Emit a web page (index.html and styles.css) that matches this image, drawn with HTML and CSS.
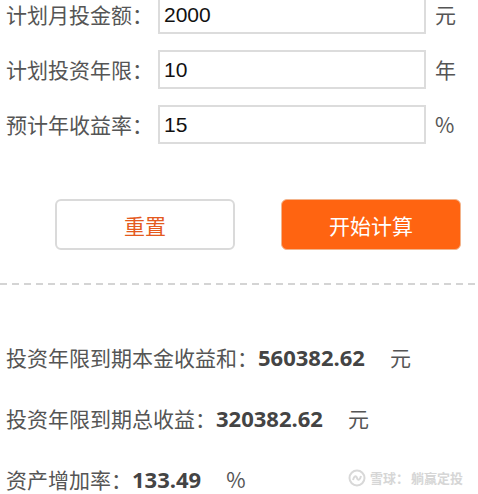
FILE: index.html
```html
<!DOCTYPE html>
<html lang="zh-CN">
<head>
<meta charset="utf-8">
<link rel="stylesheet" href="styles.css">
</head>
<body>
<div class="page">
  <div class="form">
    <div class="row">
      <span class="label">计划月投金额：</span>
      <div class="input">2000</div>
      <span class="unit">元</span>
    </div>
    <div class="row">
      <span class="label">计划投资年限：</span>
      <div class="input">10</div>
      <span class="unit">年</span>
    </div>
    <div class="row">
      <span class="label">预计年收益率：</span>
      <div class="input">15</div>
      <span class="unit">%</span>
    </div>
  </div>
  <div class="buttons">
    <button class="btn btn-reset">重置</button>
    <button class="btn btn-go">开始计算</button>
  </div>
  <div class="divider"></div>
  <div class="results">
    <div class="res"><span>投资年限到期本金收益和：</span><b class="num">560382.62</b><span class="runit">元</span></div>
    <div class="res"><span>投资年限到期总收益：</span><b class="num">320382.62</b><span class="runit">元</span></div>
    <div class="res"><span>资产增加率：</span><b class="num">133.49</b><span class="runit">%</span></div>
  </div>
  <div class="watermark">
    <svg class="wm-logo" width="20" height="18" viewBox="0 0 20 18">
      <circle cx="9" cy="9" r="7.5" fill="none" stroke="#d8d8d8" stroke-width="2"/>
      <path d="M5 11c1-4 3-5 4-2s3 2 4-2" fill="none" stroke="#d8d8d8" stroke-width="2"/>
    </svg>
    <span class="wm-text">雪球：</span><span class="wm-text">躺赢定投</span>
  </div>
</div>
</body>
</html>
```

FILE: styles.css
```css
* { box-sizing: border-box; }
html, body {
  margin: 0;
  padding: 0;
  background: #fff;
}
body {
  font-family: "Noto Sans CJK SC", "Noto Sans", sans-serif;
  color: #555;
}
.page {
  position: relative;
  width: 478px;
  height: 494px;
  overflow: hidden;
}
.form {
  margin-top: -5px;
  padding-left: 6px;
  display: flex;
  flex-direction: column;
  gap: 16px;
}
.row {
  display: flex;
  align-items: center;
  height: 39px;
}
.label {
  font-size: 21px;
  width: 152px;
  white-space: nowrap;
  line-height: 1;
}
.input {
  width: 268px;
  height: 39px;
  border: 2px solid #dcdcdc;
  font-family: "Liberation Sans", Arial, sans-serif;
  font-size: 21px;
  color: #111;
  padding-left: 4px;
  display: flex;
  align-items: center;
}
.unit {
  margin-left: 9px;
  font-size: 21px;
  line-height: 1;
  color: #555;
}
.buttons {
  display: flex;
  gap: 46px;
  margin-top: 55px;
  padding-left: 55px;
}
.btn {
  width: 180px;
  height: 51px;
  border-radius: 6px;
  font-family: "Noto Sans CJK SC", sans-serif;
  font-size: 21px;
  display: flex;
  align-items: center;
  justify-content: center;
  padding: 0;
}
.btn-reset {
  background: #fff;
  border: 2px solid #dadada;
  color: #e45a1e;
}
.btn-go {
  background: #ff6411;
  border: 1px solid #f3b48c;
  color: #fff;
}
.divider {
  margin-top: 33px;
  height: 2px;
  background-image: linear-gradient(to right, #d4d4d4 0 7px, transparent 7px 12px);
  background-size: 12px 2px;
  background-repeat: repeat-x;
}
.results {
  margin-top: 57px;
  padding-left: 6px;
  display: flex;
  flex-direction: column;
  gap: 31px;
}
.res {
  display: flex;
  align-items: center;
  height: 30px;
  font-size: 21px;
  white-space: nowrap;
  color: #555;
}
.num {
  font-family: "Open Sans", "Noto Sans", sans-serif;
  font-weight: 700;
  font-size: 22px;
  color: #444;
}
.runit {
  margin-left: 25px;
}
.watermark {
  position: absolute;
  left: 348px;
  top: 469px;
  display: flex;
  align-items: center;
  gap: 2px;
  white-space: nowrap;
  font-size: 13px;
  line-height: 18px;
  color: #d6d6d6;
  font-weight: 700;
}
.wm-text {
  white-space: nowrap;
}
```
